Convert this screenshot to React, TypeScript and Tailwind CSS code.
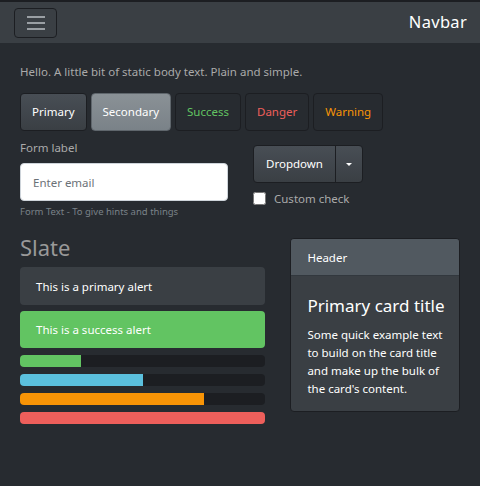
import { useState } from 'react';

export default function App() {
  const [checked, setChecked] = useState(false);

  const bars = [
    { w: '25%', c: 'bg-[#62c462]' },
    { w: '50%', c: 'bg-[#5bc0de]' },
    { w: '75%', c: 'bg-[#f89406]' },
    { w: '100%', c: 'bg-[#ee5f5b]' },
  ];

  return (
    <div className="w-[480px] h-[486px] bg-[#272b30] text-[#aaaaaa] font-['Noto_Sans','Open_Sans',sans-serif] overflow-hidden">
      {/* navbar */}
      <nav className="h-[43px] bg-[#3a3f44] border-t-2 border-[#1c1e22] flex items-center justify-between pl-[14px] pr-[13px]">
        <button className="w-[43px] h-[30px] rounded-[4px] border border-[#1c1e22] flex flex-col items-center justify-center gap-[4px]">
          <span className="block w-[18px] h-[2px] bg-[#9a9fa4]" />
          <span className="block w-[18px] h-[2px] bg-[#9a9fa4]" />
          <span className="block w-[18px] h-[2px] bg-[#9a9fa4]" />
        </button>
        <span className="text-white text-[16.5px] tracking-[0.3px]">Navbar</span>
      </nav>

      <div className="px-[20px] pt-[20px]">
        <p className="text-[11.5px] leading-[18px] text-[#aaaaaa]">Hello. A little bit of static body text. Plain and simple.</p>

        {/* buttons */}
        <div className="flex gap-[4px] mt-[12px]">
          <button className="h-[38px] px-[11px] rounded-[4px] border border-[#1c1e22] bg-gradient-to-b from-[#484e55] to-[#3a3f44] text-white text-[11.5px]">Primary</button>
          <button className="h-[38px] px-[11px] rounded-[4px] border border-[#5f666c] bg-gradient-to-b from-[#8a9196] to-[#7a8288] text-white text-[11.5px]">Secondary</button>
          <button className="h-[38px] px-[11px] rounded-[4px] border border-[#1c1e22] bg-[#272b30] text-[#62c462] text-[11.5px]">Success</button>
          <button className="h-[38px] px-[11px] rounded-[4px] border border-[#1c1e22] bg-[#272b30] text-[#ee5f5b] text-[11.5px]">Danger</button>
          <button className="h-[38px] px-[11px] rounded-[4px] border border-[#1c1e22] bg-[#272b30] text-[#f89406] text-[11.5px]">Warning</button>
        </div>

        {/* form row */}
        <div className="flex mt-[8px]">
          <div className="w-[208px]">
            <label className="block text-[11.5px] leading-[18px]">Form label</label>
            <input
              className="mt-[6px] w-[208px] h-[38px] rounded-[4px] bg-white border border-[#ced4da] px-[12px] text-[11.5px] text-[#52575c] placeholder-[#6b7177] outline-none"
              placeholder="Enter email"
            />
            <div className="text-[9.5px] text-[#7a8288] mt-[4px]">Form Text - To give hints and things</div>
          </div>
          <div className="ml-[25px] pt-[6px]">
            <div className="flex h-[38px] rounded-[4px] border border-[#1c1e22] bg-gradient-to-b from-[#484e55] to-[#3a3f44] w-[110px]">
              <button className="flex-1 text-white text-[11.5px] border-r border-[#1c1e22]">Dropdown</button>
              <button className="w-[26px] flex items-center justify-center">
                <span className="block w-0 h-0 border-l-[3px] border-r-[3px] border-t-[3px] border-l-transparent border-r-transparent border-t-white" />
              </button>
            </div>
            <label className="flex items-center gap-[8px] mt-[7px] text-[11.5px]">
              <input type="checkbox" checked={checked} onChange={() => setChecked(!checked)} className="w-[13px] h-[13px] rounded-[3px] accent-white" />
              <span className="text-[#aaaaaa]">Custom check</span>
            </label>
          </div>
        </div>

        {/* lower */}
        <div className="flex items-start mt-[15px]">
          <div className="w-[246px]">
            <h1 className="text-[22px] leading-[26px] text-[#999999]">Slate</h1>
            <div className="mt-[7px] h-[38px] rounded-[4px] bg-[#3a3f44] text-white text-[11.5px] flex items-center px-[16px]">This is a primary alert</div>
            <div className="mt-[6px] h-[37px] rounded-[4px] bg-[#62c462] text-white text-[11.5px] flex items-center px-[16px]">This is a success alert</div>
            <div className="mt-[7px] flex flex-col gap-[7px]">
              {bars.map((b, i) => (
                <div key={i} className="h-[12px] rounded-[4px] bg-[#1c1e22] overflow-hidden">
                  <div className={`h-full ${b.c}`} style={{ width: b.w }} />
                </div>
              ))}
            </div>
          </div>

          <div className="ml-[25px] mt-[4px] w-[170px] h-[174px] rounded-[4px] border border-[#1c1e22] bg-[#3a3f44] overflow-hidden">
            <div className="h-[37px] bg-[#515960] border-b border-[#32383e] text-white text-[11.5px] flex items-center px-[16px]">Header</div>
            <div className="px-[16px] pt-[19px]">
              <div className="text-white text-[17px] leading-[22px] whitespace-nowrap">Primary card title</div>
              <p className="mt-[9px] text-white text-[11.5px] leading-[18px]">Some quick example text to build on the card title and make up the bulk of the card's content.</p>
            </div>
          </div>
        </div>
      </div>
    </div>
  );
}
